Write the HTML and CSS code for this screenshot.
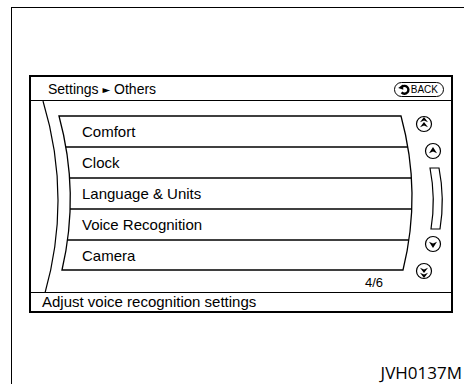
FILE: index.html
```html
<!DOCTYPE html>
<html lang="en">
<head>
    <meta charset="UTF-8">
    <meta name="viewport" content="width=device-width, initial-scale=1.0">
    <title>Settings - Others</title>
    <link rel="stylesheet" href="styles.css">
</head>
<body>

    <div class="sheet">
        <div class="screen">
            <div class="hdr">
                <span class="crumb">Settings <span class="tri">&#9658;</span> Others</span>
                <span class="back">
                    <svg class="back-icon" width="12" height="11" viewBox="0 0 12 11">
                        <path d="M3.4 3.4 A3.9 3.9 0 1 1 3.6 8.4" fill="none" stroke="#000" stroke-width="2.4"/>
                        <path d="M0.2 3.9 L5 0.5 L5.3 5.8 Z" fill="#000"/>
                    </svg>BACK
                </span>
            </div>

            <div class="main">
                <!-- curved frame, list outline and scroll buttons -->
                <svg class="deco" width="420" height="192" viewBox="0 0 420 192">
                    <defs>
                        <clipPath id="boxclip">
                            <path d="M28 15 L370 15 Q391 92 372 169 L31 169 Q49 92 28 15 Z"/>
                        </clipPath>
                    </defs>
                    <path d="M12 0 Q41 96 14 192" fill="none" stroke="#000" stroke-width="1.2"/>
                    <path d="M28 15 L370 15 Q391 92 372 169 L31 169 Q49 92 28 15 Z" fill="none" stroke="#000" stroke-width="1.3"/>
                    <g clip-path="url(#boxclip)" stroke="#000" stroke-width="1.3">
                        <line x1="0" y1="46" x2="420" y2="46"/>
                        <line x1="0" y1="77" x2="420" y2="77"/>
                        <line x1="0" y1="108" x2="420" y2="108"/>
                        <line x1="0" y1="139" x2="420" y2="139"/>
                    </g>

                    <g fill="none" stroke="#000" stroke-width="1.2">
                        <circle cx="393" cy="23" r="7.5"/>
                        <circle cx="402" cy="50" r="7.5"/>
                        <circle cx="402" cy="143" r="7.5"/>
                        <circle cx="393" cy="170" r="7.5"/>
                        <path d="M399 67 L408 67 Q414 97.5 409 128 L400 128 Q405 97.5 399 67 Z"/>
                    </g>

                    <g fill="#000">
                        <path d="M393 16 L397 21.2 L393 19.6 L389 21.2 Z"/>
                        <path d="M393 21 L397 26.2 L393 24.6 L389 26.2 Z"/>
                        <path d="M402 46 L406 52.2 L402 50.4 L398 52.2 Z"/>
                        <path d="M402 147 L406 140.8 L402 142.6 L398 140.8 Z"/>
                        <path d="M393 172 L397 166.8 L393 168.4 L389 166.8 Z"/>
                        <path d="M393 177 L397 171.8 L393 173.4 L389 171.8 Z"/>
                    </g>
                </svg>

                <ul class="menu">
                    <li>Comfort</li>
                    <li>Clock</li>
                    <li>Language &amp; Units</li>
                    <li>Voice Recognition</li>
                    <li>Camera</li>
                </ul>
                <div class="count">4/6</div>
            </div>

            <div class="status">Adjust voice recognition settings</div>
        </div>

        <div class="code">JVH0137M</div>
    </div>

</body>
</html>
```

FILE: styles.css
```css
body {
    margin: 0;
    background: #fff;
    color: #000;
    font-family: "Liberation Sans", Arial, sans-serif;
}
.sheet {
    margin: 7px 0 0 11px;
    height: 377px;
    box-sizing: border-box;
    border-top: 1px solid #000;
    border-left: 1px solid #000;
    overflow: hidden;
}
.screen {
    margin: 67px 0 0 17px;
    width: 424px;
    height: 238px;
    box-sizing: border-box;
    border: 2px solid #000;
    display: flex;
    flex-direction: column;
}
.hdr {
    height: 20px;
    border-bottom: 1px solid #000;
    display: flex;
    align-items: center;
    justify-content: space-between;
    padding: 3px 7px 0 17px;
    box-sizing: content-box;
}
.crumb {
    font-size: 14px;
    line-height: 20px;
}
.tri {
    font-family: "DejaVu Sans", sans-serif;
    font-size: 10px;
    position: relative;
    top: -1px;
}
.back {
    display: flex;
    align-items: center;
    gap: 1px;
    height: 13px;
    padding: 0 5px 0 3px;
    border: 1.3px solid #000;
    border-radius: 8px;
    font-size: 10px;
    line-height: 13px;
    position: relative;
    top: -1px;
}
.back-icon {
    display: block;
}
.main {
    position: relative;
    height: 192px;
}
.deco {
    position: absolute;
    left: 0;
    top: 0;
}
.menu {
    list-style: none;
    margin: 0;
    padding: 15px 0 0 51px;
}
.menu li {
    height: 31px;
    line-height: 31px;
    font-size: 15px;
}
.count {
    margin-top: 6px;
    padding-right: 68px;
    text-align: right;
    font-size: 13px;
    line-height: 12px;
}
.status {
    height: 18px;
    border-top: 1px solid #000;
    padding-left: 11px;
    font-size: 15px;
    line-height: 18px;
}
.code {
    margin-top: 51px;
    padding-right: 2px;
    text-align: right;
    font-family: "Open Sans", sans-serif;
    font-weight: 500;
    font-size: 17px;
    line-height: 18px;
}
```
